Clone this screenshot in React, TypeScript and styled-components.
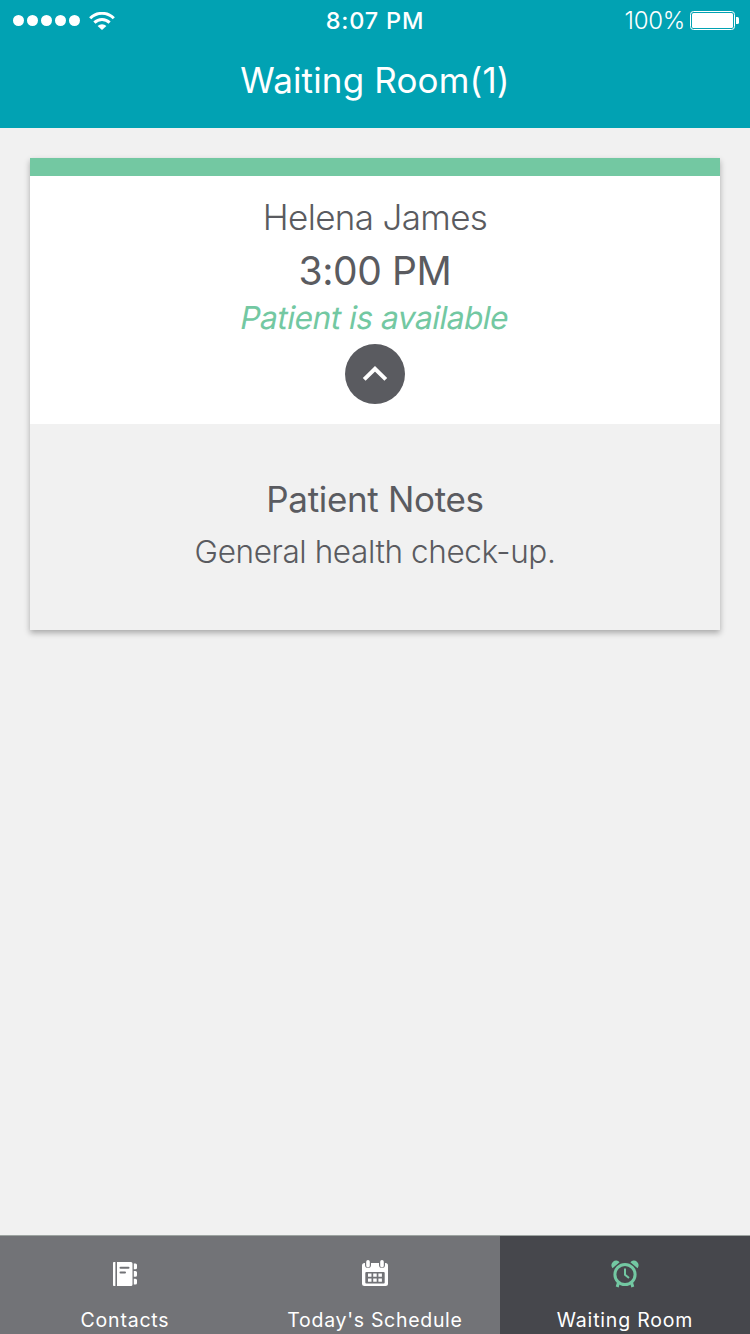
import React from "react";
import styled, { createGlobalStyle } from "styled-components";

const GlobalStyle = createGlobalStyle`
  * { box-sizing: border-box; }
  body { margin: 0; background: #f1f1f1; font-family: Inter, "Liberation Sans", sans-serif; }
`;

const Screen = styled.div`
  display: flex;
  flex-direction: column;
  width: 750px;
  height: 1334px;
  overflow: hidden;
  background: #f1f1f1;
`;

const Header = styled.header`
  height: 128px;
  background: #01a2b3;
  color: #fff;
`;

const StatusBar = styled.div`
  display: grid;
  grid-template-columns: 1fr auto 1fr;
  align-items: center;
  height: 41px;
  padding: 0 12px 0 12px;
`;

const Signal = styled.div`
  display: flex;
  align-items: center;
  gap: 3px;
  padding-left: 1px;
`;

const Dot = styled.i`
  width: 11px;
  height: 11px;
  border-radius: 50%;
  background: #fff;
`;

const WifiIcon = styled.svg`
  margin-left: 6px;
`;

const Battery = styled.div`
  display: flex;
  justify-content: flex-end;
  align-items: center;
  gap: 5px;
  margin-right: -1px;
`;

interface TextProps {
  $size: number;
  $line: number;
  $weight?: number;
  $spacing?: number;
  $color?: string;
  $slanted?: boolean;
}

const Text = styled.div<TextProps>`
  font-size: ${(p) => p.$size}px;
  line-height: ${(p) => p.$line}px;
  font-weight: ${(p) => p.$weight ?? 400};
  letter-spacing: ${(p) => p.$spacing ?? 0}px;
  transform: ${(p) => (p.$slanted ? "skewX(-11deg)" : "none")};
  color: ${(p) => p.$color ?? "inherit"};
  text-align: center;
  white-space: nowrap;
`;

const Main = styled.main`
  flex: 1;
  padding: 30px;
`;

const Card = styled.section`
  border-top: 18px solid #73c8a2;
  background: #fff;
  color: #5a5b60;
  box-shadow: 0 3px 6px rgba(0, 0, 0, 0.3);
`;

const Appointment = styled.div`
  display: flex;
  flex-direction: column;
  align-items: center;
  padding: 16px 0 20px;
`;

const Notes = styled.div`
  padding: 50px 0;
  background: #f1f1f1;
`;

const Toggle = styled.button`
  display: flex;
  align-items: center;
  justify-content: center;
  width: 60px;
  height: 60px;
  margin-top: 8px;
  padding: 0;
  border: 0;
  border-radius: 50%;
  background: #5a5b60;
`;

const TabBar = styled.nav`
  display: grid;
  grid-template-columns: repeat(3, 1fr);
  height: 99px;
`;

const Tab = styled.div<{ $active?: boolean }>`
  display: flex;
  flex-direction: column;
  align-items: center;
  padding-top: 23px;
  border-top: 1px solid #9da4a1;
  background: ${(p) => (p.$active ? "#46474c" : "#727377")};
  color: #fff;
`;

const TabIcon = styled.svg`
  display: block;
  flex: none;
  margin-bottom: 18px;
`;

export default function App() {
  return (
    <Screen>
      <GlobalStyle />
      <Header>
        <StatusBar>
          <Signal>
            {[0, 1, 2, 3, 4].map((n) => (
              <Dot key={n} />
            ))}
            <WifiIcon width="26" height="18" viewBox="0 0 26 18">
              <g fill="none" stroke="#fff" strokeWidth="3">
                <path d="M1.2 6.3A16.5 16.5 0 0 1 24.8 6.3" />
                <path d="M5.4 10.6A10.7 10.7 0 0 1 20.6 10.6" />
              </g>
              <path d="M8.6 14a6.2 6.2 0 0 1 8.8 0L13 18z" fill="#fff" />
            </WifiIcon>
          </Signal>
          <Text $size={23.5} $line={41} $weight={500} $spacing={0.8}>8:07 PM</Text>
          <Battery>
            <Text $size={24} $line={41} $weight={300} $spacing={-0.3}>100%</Text>
            <svg width="49" height="19" viewBox="0 0 49 19">
              <rect x=".5" y=".5" width="44" height="18" rx="3" fill="none" stroke="#fff" />
              <rect x="2" y="2" width="41" height="15" rx="1.5" fill="#fff" />
              <path d="M46 6h1.5a1.5 1.5 0 0 1 1.5 1.5v4a1.5 1.5 0 0 1-1.5 1.5H46z" fill="#fff" />
            </svg>
          </Battery>
        </StatusBar>
        <Text $size={35} $line={79} $weight={400} $spacing={0.15}>Waiting Room(1)</Text>
      </Header>

      <Main>
        <Card>
          <Appointment>
            <Text $size={35} $line={50} $weight={300} $spacing={-0.65}>Helena James</Text>
            <Text $size={39} $line={58} $spacing={-0.4}>3:00 PM</Text>
            <Text $size={31.5} $line={36} $spacing={-0.4} $slanted $color="#73c8a2">Patient is available</Text>
            <Toggle aria-label="Collapse notes">
              <svg width="26" height="16" viewBox="0 0 26 16">
                <path d="M2.2 13.4 13 2.8 23.8 13.4" fill="none" stroke="#fff" strokeWidth="4" />
              </svg>
            </Toggle>
          </Appointment>
          <Notes>
            <Text $size={35} $line={50} $spacing={-0.33}>Patient Notes</Text>
            <Text $size={31.5} $line={56} $weight={300} $spacing={-0.4}>General health check-up.</Text>
          </Notes>
        </Card>
      </Main>

      <TabBar>
        <Tab>
          <TabIcon width="30" height="30" viewBox="0 0 30 30" fill="#fff">
            <path d="M4 3h-.2Q3 3 3 4v22q0 1 .8 1H5.400V3zM7 3h14q1.500 0 1.500 1.500v21Q22.500 27 21 27H7z" />
            <path d="M23.800 4.500h1.700a1.500 1.500 0 0 1 1.500 1.500v2.700a1.500 1.500 0 0 1-1.500 1.500h-1.700zM23.800 12.100h1.700a1.500 1.500 0 0 1 1.500 1.500v2.700a1.500 1.500 0 0 1-1.500 1.500h-1.700zM23.800 19.700h1.700a1.500 1.500 0 0 1 1.500 1.500v2.700a1.500 1.500 0 0 1-1.500 1.500h-1.700z" />
            <path d="M10.500 8.700h8M10.500 13.500h4.500" stroke="#727377" strokeWidth="2" strokeLinecap="round" />
          </TabIcon>
          <Text $size={19.5} $line={26} $weight={400} $spacing={0.8}>Contacts</Text>
        </Tab>
        <Tab>
          <TabIcon width="30" height="30" viewBox="0 0 30 30">
            <rect x="2" y="4" width="26" height="23" rx="2.5" fill="#fff" />
            <path d="M8 0v6M22 0v6" stroke="#727377" strokeWidth="6" strokeLinecap="round" />
            <path d="M8 2.800v4M22 2.800v4" stroke="#fff" strokeWidth="3.600" strokeLinecap="round" />
            <rect x="5.300" y="13" width="19.400" height="11.500" rx="1" fill="#727377" />
            <path d="M8 14.600h3.500v3.200H8zM13.200 14.600h3.500v3.200h-3.500zM18.400 14.600h3.500v3.200h-3.500zM8 19.600h3.500v3.200H8zM13.200 19.600h3.500v3.200h-3.500zM18.400 19.600h3.500v3.200h-3.500z" fill="#fff" />
          </TabIcon>
          <Text $size={19.5} $line={26} $weight={400} $spacing={0.7}>Today's Schedule</Text>
        </Tab>
        <Tab $active>
          <TabIcon width="30" height="30" viewBox="0 0 30 30">
            <g fill="none" stroke="#73c8a2">
              <circle cx="15" cy="15.500" r="10.100" strokeWidth="3" />
              <path d="M15 9.500v6.200l4 3.400" strokeWidth="2" />
              <path d="M8.500 23.500 7.200 28M21.500 23.500 22.800 28" strokeWidth="3" />
            </g>
            <path d="M2.500 9.200A4.200 4.200 0 0 1 9.600 3.200zM27.500 9.200A4.200 4.200 0 0 0 20.400 3.200z" fill="#73c8a2" />
          </TabIcon>
          <Text $size={19.5} $line={26} $weight={400} $spacing={0.8}>Waiting Room</Text>
        </Tab>
      </TabBar>
    </Screen>
  );
}
